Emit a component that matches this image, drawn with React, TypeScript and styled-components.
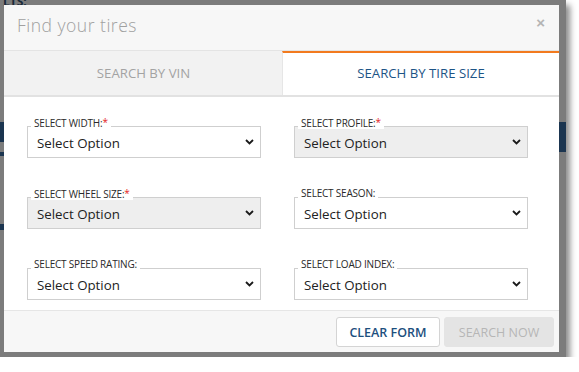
import styled, { createGlobalStyle } from 'styled-components';

const GlobalStyle = createGlobalStyle`
  html, body {
    margin: 0;
    padding: 0;
    background: #ffffff;
  }
  * {
    box-sizing: border-box;
  }
`;

const Frame = styled.div`
  position: relative;
  width: 566px;
  height: 357px;
  padding: 5px 6px 5px 4px;
  background: #7c7c7c;
  box-shadow: 4px 5px 6px rgba(0, 0, 0, 0.45);
  overflow: hidden;
`;

const PageBit = styled.span<{ $x: number; $y: number; $w: number; $h: number }>`
  position: absolute;
  left: ${(p) => p.$x}px;
  top: ${(p) => p.$y}px;
  width: ${(p) => p.$w}px;
  height: ${(p) => p.$h}px;
  background: #1b3550;
`;

const PageText = styled.span`
  position: absolute;
  left: 3px;
  top: -7px;
  font: bold 12px 'Open Sans', sans-serif;
  color: #1a2a3a;
`;

const Modal = styled.div`
  position: relative;
  width: 555px;
  height: 347px;
  background: #ffffff;
  display: flex;
  flex-direction: column;
  font-family: 'Open Sans', 'Liberation Sans', sans-serif;
`;

const Header = styled.div`
  height: 46px;
  flex: none;
  display: flex;
  align-items: center;
  justify-content: space-between;
  padding: 0 14px 6px 13px;
  background: #f7f7f7;
  border-bottom: 1px solid #e4e4e4;
`;

const Title = styled.h4`
  margin: 0;
  font: 300 17.5px 'Open Sans', sans-serif;
  color: #a0a0a0;
  letter-spacing: 0.5px;
`;

const Close = styled.button`
  border: 0;
  padding: 0;
  margin-top: -4px;
  background: transparent;
  font: bold 15px 'Liberation Sans', sans-serif;
  color: #b4b4b4;
  line-height: 1;
`;

const Tabs = styled.div`
  height: 46px;
  flex: none;
  display: grid;
  grid-template-columns: 278px 1fr;
  border-bottom: 2px solid #e2e2e2;
`;

const Tab = styled.div<{ $active?: boolean }>`
  display: flex;
  align-items: center;
  justify-content: center;
  font-size: 13.2px;
  text-transform: uppercase;
  background: ${(p) => (p.$active ? '#ffffff' : '#f2f2f2')};
  color: ${(p) => (p.$active ? '#1d5486' : '#a3a3a3')};
  border-top: 2px solid ${(p) => (p.$active ? '#f27a1e' : 'transparent')};
  border-left: 1px solid ${(p) => (p.$active ? '#e6e6e6' : 'transparent')};
  padding-bottom: 2px;
`;

const Body = styled.div`
  flex: 1;
  display: grid;
  grid-template-columns: 234px 234px;
  column-gap: 33px;
  row-gap: 39px;
  align-content: start;
  padding: 29px 0 10px 23px;
`;

const Field = styled.div`
  position: relative;
`;

const Label = styled.label`
  position: absolute;
  left: 4px;
  top: -10px;
  z-index: 1;
  padding: 0 3px;
  background: #ffffff;
  font-size: 10px;
  line-height: 12px;
  color: #2a2a2a;
  text-transform: uppercase;
  letter-spacing: -0.2px;
`;

const Star = styled.span`
  color: #e41b1b;
  font-size: 10px;
  vertical-align: 1px;
`;

const Select = styled.select<{ $locked?: boolean }>`
  appearance: none;
  display: block;
  width: 100%;
  height: 32px;
  padding: 1px 0 0 9px;
  border: 1px solid #cfcfcf;
  border-radius: 0;
  background: ${(p) => (p.$locked ? '#eeeeee' : '#ffffff')};
  font: 13.3px 'Open Sans', sans-serif;
  color: #222222;
  opacity: 1;
`;

const Chevron = styled.svg`
  position: absolute;
  right: 7px;
  top: 13px;
  width: 9px;
  height: 6px;
  pointer-events: none;
`;

const Footer = styled.div`
  height: 42px;
  flex: none;
  display: flex;
  justify-content: flex-end;
  gap: 4px;
  padding: 6px 5px 5px;
  background: #f7f7f7;
  border-top: 1px solid #e6e6e6;
`;

const Button = styled.button<{ $primary?: boolean }>`
  height: 30px;
  width: ${(p) => (p.$primary ? 110 : 104)}px;
  border-radius: 3px;
  border: 1px solid ${(p) => (p.$primary ? '#e4e4e4' : '#d4d4d4')};
  background: ${(p) => (p.$primary ? '#e4e4e4' : '#ffffff')};
  color: ${(p) => (p.$primary ? '#b6b6b6' : '#1d4f7e')};
  font: ${(p) => (p.$primary ? 400 : 600)} 12.5px 'Open Sans', sans-serif;
  text-transform: uppercase;
  padding: 0;
`;

type FieldProps = { label: string; required?: boolean; locked?: boolean };

const SelectField = ({ label, required, locked }: FieldProps) => (
  <Field>
    <Label>
      {label}
      {required && <Star>*</Star>}
    </Label>
    <Select $locked={locked} defaultValue=''>
      <option value=''>Select Option</option>
    </Select>
    <Chevron viewBox='0 0 9 6'>
      <path d='M1 1l3.5 3.5L8 1' fill='none' stroke='#1a1a1a' strokeWidth='1.8' />
    </Chevron>
  </Field>
);

export default function App() {
  return (
    <>
      <GlobalStyle />
      <Frame>
        <PageText>LTS:</PageText>
        <PageBit $x={0} $y={122} $w={4} $h={20} />
        <PageBit $x={0} $y={152} $w={4} $h={4} />
        <PageBit $x={0} $y={224} $w={4} $h={6} />
        <PageBit $x={559} $y={122} $w={7} $h={30} />
        <Modal>
          <Header>
            <Title>Find your tires</Title>
            <Close>×</Close>
          </Header>
          <Tabs>
            <Tab>Search by VIN</Tab>
            <Tab $active>Search by tire size</Tab>
          </Tabs>
          <Body>
            <SelectField label='Select Width:' required />
            <SelectField label='Select Profile:' required locked />
            <SelectField label='Select Wheel Size:' required locked />
            <SelectField label='Select Season:' />
            <SelectField label='Select Speed Rating:' />
            <SelectField label='Select Load Index:' />
          </Body>
          <Footer>
            <Button>Clear form</Button>
            <Button $primary>Search now</Button>
          </Footer>
        </Modal>
      </Frame>
    </>
  );
}
